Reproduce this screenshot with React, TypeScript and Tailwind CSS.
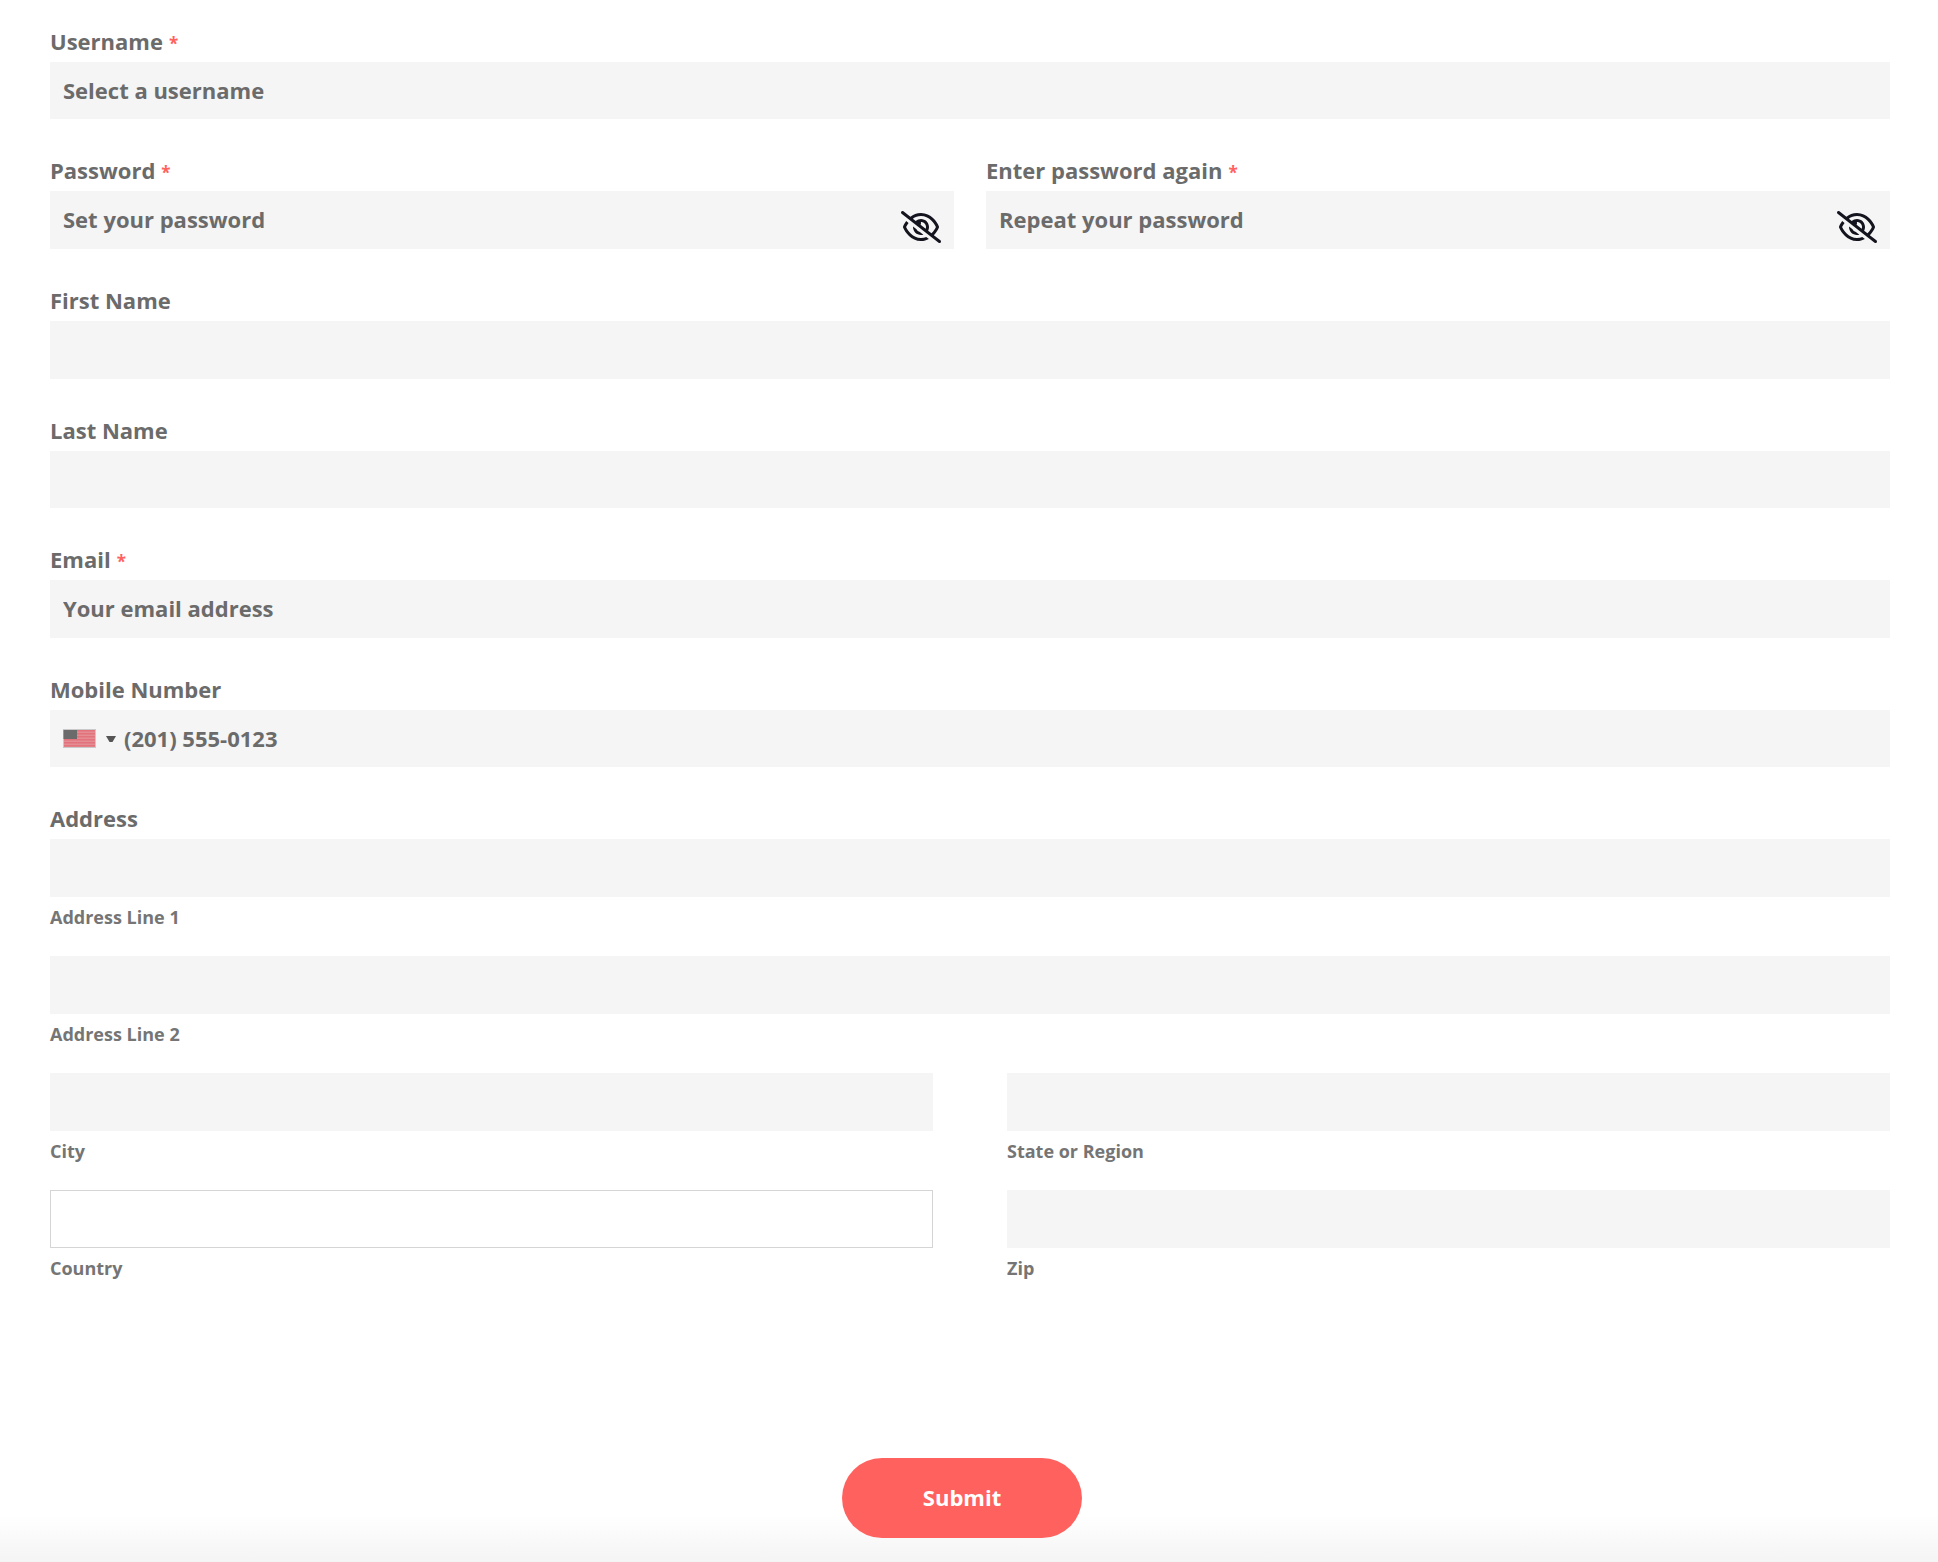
import { useState } from "react";
import { FaRegEyeSlash, FaRegEye } from "react-icons/fa6";

type LabelProps = {
  id: string;
  text: string;
  required?: boolean;
};

const inputStyles =
  "block w-full bg-[#f5f5f5] px-[13px] pb-0.5 text-[22px] font-bold text-[#6b6b6b] placeholder:text-[#6b6b6b] placeholder:opacity-100 outline-none";

const FieldLabel = ({ id, text, required }: LabelProps) => (
  <label className="block h-[42px] text-[22px] leading-[42px] font-bold" htmlFor={id}>
    {text}
    {required && <span className="ml-1.5 text-[17px] text-[#ff625e]">*</span>}
  </label>
);

const PasswordField = ({
  id,
  text,
  placeholder,
}: LabelProps & { placeholder: string }) => {
  const [visible, setVisible] = useState(false);

  return (
    <div>
      <FieldLabel id={id} text={text} required />
      <div className="relative">
        <input
          className={`${inputStyles} h-[58px]`}
          id={id}
          type={visible ? "text" : "password"}
          placeholder={placeholder}
        />
        <button
          className="absolute right-[13px] bottom-1.5 text-[#14141e]"
          type="button"
          aria-label={visible ? "Hide password" : "Show password"}
          onClick={() => setVisible(!visible)}>
          {visible ? (
            <FaRegEye className="h-8 w-10" />
          ) : (
            <FaRegEyeSlash className="h-8 w-10" />
          )}
        </button>
      </div>
    </div>
  );
};

const AddressField = ({ id, text }: LabelProps) => (
  <div className="flex flex-col">
    <input className={`${inputStyles} h-[58px]`} id={id} type="text" />
    <AddressCaption id={id} text={text} />
  </div>
);

const AddressCaption = ({ id, text }: LabelProps) => (
  <label
    className="block h-[59px] pt-2 text-[18px] leading-6 font-bold text-[#757575]"
    htmlFor={id}>
    {text}
  </label>
);

const UsFlag = () => (
  <svg className="h-[19px] w-[33px]" viewBox="0 0 33 19" aria-hidden="true">
    <rect width="33" height="19" fill="#c9c9c9" />
    <rect x="1" y="1" width="31" height="17" fill="#e58d92" />
    {[1, 4, 7, 10, 13, 16].map((y) => (
      <rect key={y} x="1" y={y} width="31" height="1.5" fill="#e2737c" />
    ))}
    <rect x="0.5" y="1" width="13.5" height="9" fill="#6b6b6b" />
  </svg>
);

const App = () => {
  return (
    <div className="min-h-screen bg-white font-['Open_Sans',sans-serif] text-[#6b6b6b]">
      <form onSubmit={(e) => e.preventDefault()}>
        <div className="flex flex-col gap-[30px] pt-5 pr-12 pl-[50px]">
          <div>
            <FieldLabel id="username" text="Username" required />
            <input
              className={`${inputStyles} h-[57px]`}
              id="username"
              type="text"
              placeholder="Select a username"
            />
          </div>

          <div className="grid grid-cols-2 gap-8">
            <PasswordField
              id="password"
              text="Password"
              placeholder="Set your password"
            />
            <PasswordField
              id="password-again"
              text="Enter password again"
              placeholder="Repeat your password"
            />
          </div>

          <div>
            <FieldLabel id="first-name" text="First Name" />
            <input className={`${inputStyles} h-[58px]`} id="first-name" type="text" />
          </div>

          <div>
            <FieldLabel id="last-name" text="Last Name" />
            <input className={`${inputStyles} h-[57px]`} id="last-name" type="text" />
          </div>

          <div>
            <FieldLabel id="email" text="Email" required />
            <input
              className={`${inputStyles} h-[58px]`}
              id="email"
              type="email"
              placeholder="Your email address"
            />
          </div>

          <div>
            <FieldLabel id="mobile" text="Mobile Number" />
            <div className="flex items-center bg-[#f5f5f5] pl-[13px]">
              <button
                className="flex items-center gap-2.5"
                type="button"
                aria-label="Choose country code">
                <UsFlag />
                <svg className="h-1.5 w-2.5" viewBox="0 0 10 6" aria-hidden="true">
                  <path d="M0 0h10L6.5 6h-3z" fill="#555" />
                </svg>
              </button>
              <input
                className={`${inputStyles} h-[57px] pl-2`}
                id="mobile"
                type="tel"
                placeholder="(201) 555-0123"
              />
            </div>
          </div>

          <div>
            <FieldLabel id="address-1" text="Address" />
            <AddressField id="address-1" text="Address Line 1" />
            <AddressField id="address-2" text="Address Line 2" />
            <div className="grid grid-cols-2 gap-x-[74px]">
              <AddressField id="city" text="City" />
              <AddressField id="state" text="State or Region" />
              <div>
                <select
                  className="block h-[58px] w-full appearance-none border border-[#d5d5d5] bg-white px-3 text-[22px] font-bold outline-none"
                  id="country"
                  defaultValue="">
                  <option value=""></option>
                </select>
                <AddressCaption id="country" text="Country" />
              </div>
              <AddressField id="zip" text="Zip" />
            </div>
          </div>
        </div>

        <div className="mt-[151px] flex justify-center bg-linear-to-b from-white from-55% to-[#f4f4f4] pr-3.5 pb-6">
          <button
            className="h-20 w-60 rounded-full bg-[#ff625e] pb-0.5 text-[22px] font-bold text-white"
            type="submit">
            Submit
          </button>
        </div>
      </form>
    </div>
  );
};

export default App;
